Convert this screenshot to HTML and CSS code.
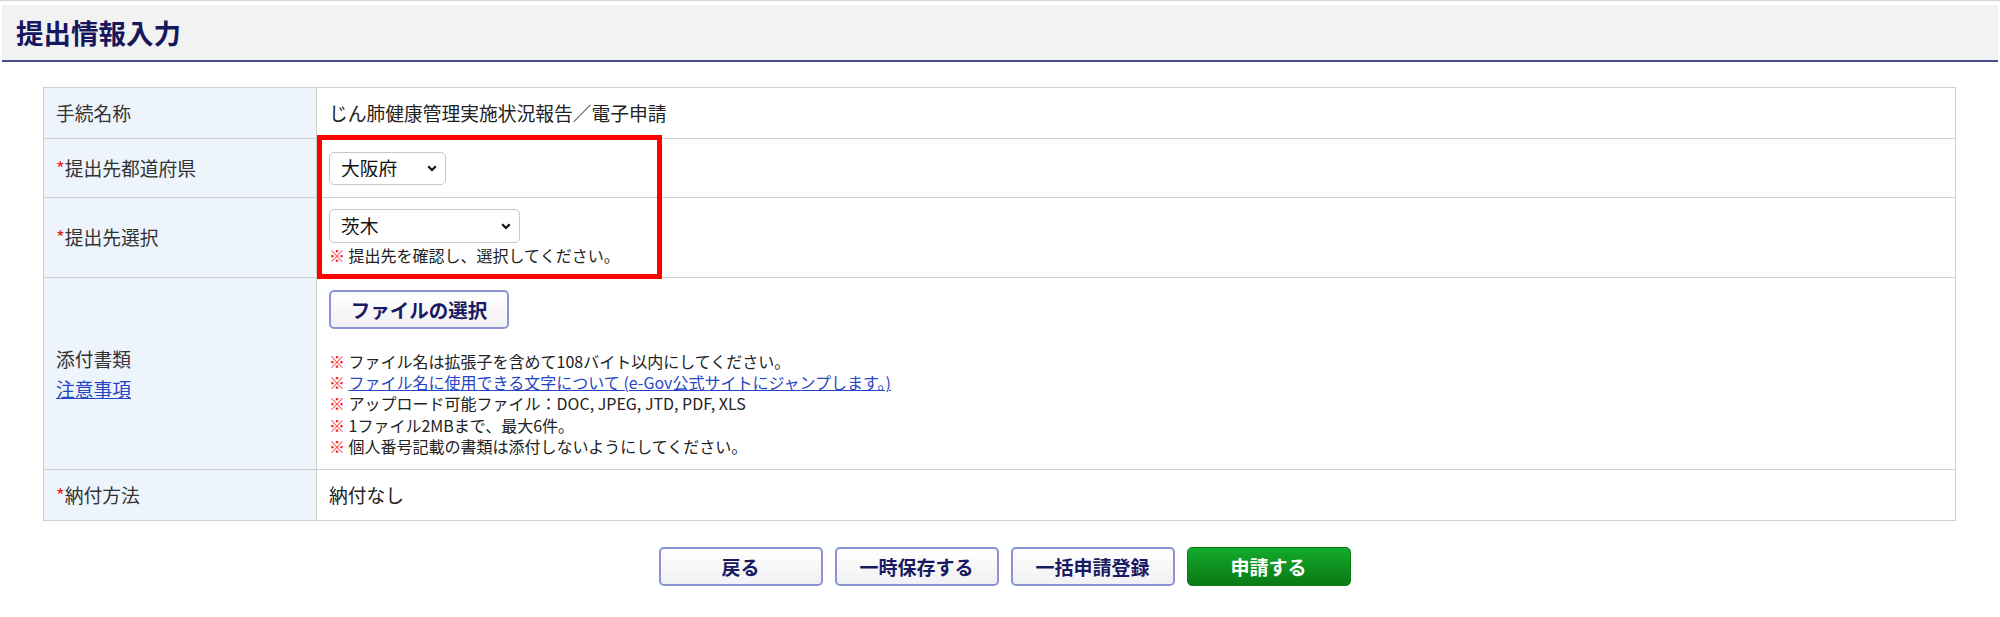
FILE: index.html
```html
<!DOCTYPE html>
<html lang="ja">
<head>
<meta charset="utf-8">
<title>提出情報入力</title>
<link rel="stylesheet" href="styles.css">
</head>
<body>
<div class="page">
  <div class="header"><h1 class="title">提出情報入力</h1></div>

  <div class="main">
    <div class="form-wrap">
      <table class="form">
        <tr class="r1">
          <th>手続名称</th>
          <td>じん肺健康管理実施状況報告／電子申請</td>
        </tr>
        <tr class="r2">
          <th><span class="req">*</span>提出先都道府県</th>
          <td>
            <span class="sel sel-pref">
              <select><option>大阪府</option></select>
              <svg class="chev" viewBox="0 0 10 7" width="10" height="7"><path d="M1.2 1.2 L5 5 L8.8 1.2" fill="none" stroke="#111" stroke-width="2.2"/></svg>
            </span>
          </td>
        </tr>
        <tr class="r3">
          <th><span class="req">*</span>提出先選択</th>
          <td>
            <span class="sel sel-office">
              <select><option>茨木</option></select>
              <svg class="chev" viewBox="0 0 10 7" width="10" height="7"><path d="M1.2 1.2 L5 5 L8.8 1.2" fill="none" stroke="#111" stroke-width="2.2"/></svg>
            </span>
            <div class="note"><span class="kome">※</span> 提出先を確認し、選択してください。</div>
          </td>
        </tr>
        <tr class="r4">
          <th>
            <div class="lbl-line">添付書類</div>
            <div class="lbl-line"><a href="#" class="link">注意事項</a></div>
          </th>
          <td>
            <button class="btn btn-file">ファイルの選択</button>
            <ul class="notes">
              <li><span class="kome">※</span> ファイル名は拡張子を含めて108バイト以内にしてください。</li>
              <li><span class="kome">※</span> <a href="#" class="link">ファイル名に使用できる文字について (e-Gov公式サイトにジャンプします。)</a></li>
              <li><span class="kome">※</span> アップロード可能ファイル：DOC, JPEG, JTD, PDF, XLS</li>
              <li><span class="kome">※</span> 1ファイル2MBまで、最大6件。</li>
              <li><span class="kome">※</span> 個人番号記載の書類は添付しないようにしてください。</li>
            </ul>
          </td>
        </tr>
        <tr class="r5">
          <th><span class="req">*</span>納付方法</th>
          <td>納付なし</td>
        </tr>
      </table>
      <div class="highlight"></div>
    </div>

    <div class="actions">
      <button class="btn btn-act">戻る</button>
      <button class="btn btn-act">一時保存する</button>
      <button class="btn btn-act">一括申請登録</button>
      <button class="btn btn-act btn-primary">申請する</button>
    </div>
  </div>
</div>
</body>
</html>
```

FILE: styles.css
```css
html, body {
  margin: 0;
  padding: 0;
  background: #ffffff;
}
body {
  font-family: "Noto Sans CJK JP", "Noto Sans", sans-serif;
  color: #222;
  border-top: 1px solid #d4d4d4;
}
.page {
  width: 2000px;
}
.header {
  margin: 4px 2px 0 2px;
  height: 55px;
  background: #f2f2f2;
  border-bottom: 2px solid #4a4c8e;
  display: flex;
  align-items: center;
}
.title {
  margin: 0 0 0 14px;
  font-size: 27.5px;
  font-weight: 700;
  color: #17175e;
  line-height: 1;
  letter-spacing: 0;
}
.main {
  padding: 25px 44px 0 43px;
}
.form-wrap {
  position: relative;
}
.form {
  width: 100%;
  border-collapse: collapse;
  border: 1px solid #d0d0d0;
  font-size: 18.75px;
}
.form th,
.form td {
  border: 1px solid #d0d0d0;
  vertical-align: middle;
  text-align: left;
  padding: 0 12px;
  line-height: 1.3;
}
.form th {
  width: 248px;
  background: #edf4fc;
  font-weight: 400;
  color: #333;
}
.form td {
  color: #222;
}
.r1 { height: 51px; }
.r2 { height: 59px; }
.r3 { height: 80px; }
.r5 { height: 51px; }
.r4 td {
  padding-top: 12px;
  padding-bottom: 12px;
}
.req {
  color: #ee2222;
}
.sel {
  position: relative;
  display: inline-block;
  vertical-align: middle;
}
.sel select {
  -webkit-appearance: none;
  appearance: none;
  font-family: "Noto Sans CJK JP", "Noto Sans", sans-serif;
  font-size: 18.75px;
  color: #111;
  background: #fff;
  border: 1px solid #c8c8c8;
  border-radius: 5px;
  padding: 0 0 0 11px;
  margin: 0;
  line-height: 1;
  display: block;
}
.sel-pref select {
  width: 117px;
  height: 33px;
}
.sel-office select {
  width: 191px;
  height: 34px;
}
.chev {
  position: absolute;
  right: 9px;
  top: 50%;
  margin-top: -3px;
  pointer-events: none;
}
.note {
  margin-top: 2px;
  font-size: 16px;
  line-height: 21px;
  color: #222;
}
.kome {
  color: #ff1111;
  font-weight: 700;
}
.lbl-line {
  line-height: 30px;
}
.link {
  color: #2746c4;
  text-decoration: underline;
}
.btn {
  font-family: "Noto Sans CJK JP", "Noto Sans", sans-serif;
  font-weight: 700;
  color: #1a1a62;
  background: linear-gradient(#ffffff, #f1f1f3);
  border: 2px solid #8a93d5;
  border-radius: 5px;
  cursor: pointer;
  padding: 0;
}
.btn-file {
  display: block;
  width: 180px;
  height: 39px;
  font-size: 19.5px;
  margin: 0 0 22px 0;
}
.notes {
  list-style: none;
  margin: 0;
  padding: 0;
  font-size: 16px;
  line-height: 21.2px;
  color: #222;
}
.highlight {
  position: absolute;
  left: 274px;
  top: 48px;
  width: 345px;
  height: 144px;
  box-sizing: border-box;
  border: 5px solid #ff0000;
  pointer-events: none;
}
.actions {
  display: flex;
  justify-content: center;
  gap: 12px;
  margin-top: 26px;
  padding-left: 10px;
}
.btn-act {
  width: 164px;
  height: 39px;
  font-size: 19px;
}
.btn-primary {
  color: #ffffff;
  background: linear-gradient(#13aa2c, #0a7a14);
  border: 1px solid #0d7d1a;
}
```
